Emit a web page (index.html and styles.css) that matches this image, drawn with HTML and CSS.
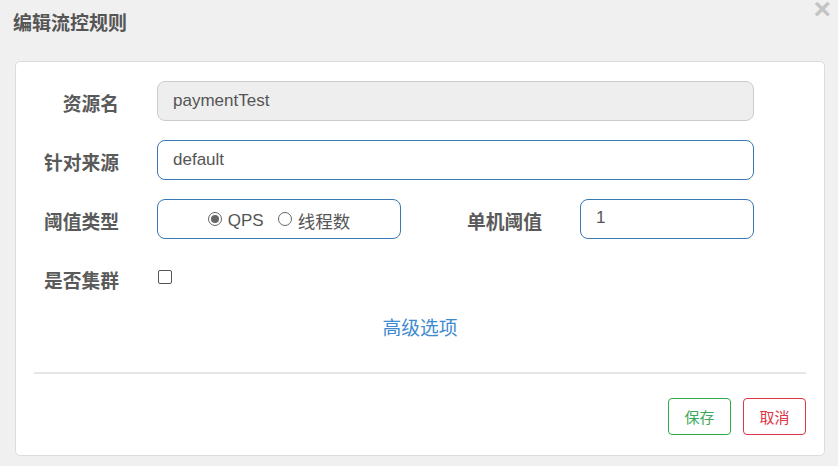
FILE: index.html
```html
<!DOCTYPE html>
<html lang="zh">
<head>
<meta charset="utf-8">
<title>编辑流控规则</title>
<link rel="stylesheet" href="styles.css">
</head>
<body>
<div class="dialog">
  <div class="header">
    <h3 class="title">编辑流控规则</h3>
    <span class="close">×</span>
  </div>
  <div class="panel">
    <div class="form">
      <div class="row">
        <label class="label">资源名</label>
        <div class="input input-disabled input-wide">paymentTest</div>
      </div>
      <div class="row">
        <label class="label">针对来源</label>
        <div class="input input-wide">default</div>
      </div>
      <div class="row">
        <label class="label">阈值类型</label>
        <div class="radio-box">
          <span class="radio checked"></span><span class="radio-text">QPS</span>
          <span class="radio radio-second"></span><span class="radio-text cjk">线程数</span>
        </div>
        <label class="label label-second">单机阈值</label>
        <div class="input input-short">1</div>
      </div>
      <div class="row">
        <label class="label">是否集群</label>
        <span class="checkbox"></span>
      </div>
    </div>
    <div class="advanced">高级选项</div>
    <div class="divider"></div>
    <div class="footer">
      <button class="btn btn-save">保存</button>
      <button class="btn btn-cancel">取消</button>
    </div>
  </div>
</div>
</body>
</html>
```
FILE: styles.css
```css
* { box-sizing: border-box; }
html, body {
  margin: 0;
  padding: 0;
  background: #f0f0f0;
  font-family: "Liberation Sans", "Noto Sans CJK SC", sans-serif;
}
.dialog {
  position: relative;
  width: 838px;
  height: 466px;
}
.header {
  height: 61px;
  padding: 12px 0 0 13px;
}
.title {
  margin: 0;
  font-family: "Noto Sans CJK SC", sans-serif;
  font-size: 19px;
  line-height: 20px;
  font-weight: 700;
  color: #555;
}
.close {
  position: absolute;
  top: 0;
  right: 7px;
  font-family: "Liberation Sans", sans-serif;
  font-size: 30px;
  font-weight: 700;
  line-height: 18px;
  color: #c4c4c4;
}
.panel {
  margin: 0 13px 0 15px;
  height: 395px;
  background: #fff;
  border: 1px solid #dcdcdc;
  border-radius: 5px;
}
.form {
  padding-top: 19px;
  display: flex;
  flex-direction: column;
  gap: 19px;
}
.row {
  display: flex;
  align-items: center;
  height: 40px;
}
.label {
  width: 103px;
  margin-right: 38px;
  text-align: right;
  font-family: "Noto Sans CJK SC", sans-serif;
  font-weight: 700;
  font-size: 18.75px;
  color: #5a5a5a;
  padding-top: 3px;
}
.label-second {
  width: 141px;
}
.input {
  height: 40px;
  border: 1px solid #3a78b5;
  border-radius: 8px;
  padding: 0 15px;
  display: flex;
  align-items: center;
  font-size: 17px;
  color: #555;
}
.input-wide { width: 597px; }
.input-short { width: 174px; padding-bottom: 3px; }
.input-disabled {
  background: #eee;
  border-color: #ccc;
}
.radio-box {
  width: 244px;
  height: 40px;
  border: 1px solid #3a78b5;
  border-radius: 8px;
  display: flex;
  align-items: center;
  justify-content: center;
  padding-top: 3px;
  font-size: 17px;
  color: #555;
}
.radio {
  width: 14px;
  height: 14px;
  border: 1.5px solid #666;
  border-radius: 50%;
  display: inline-flex;
  align-items: center;
  justify-content: center;
  margin-right: 6px;
  margin-top: -3px;
}
.radio.checked::after {
  content: "";
  width: 8px;
  height: 8px;
  border-radius: 50%;
  background: #666;
}
.radio-second { margin-left: 14px; }
.radio-text.cjk {
  font-family: "Noto Sans CJK SC", sans-serif;
  font-size: 17.5px;
}
.checkbox {
  width: 14px;
  height: 14px;
  border: 1.5px solid #555;
  border-radius: 2px;
  margin-top: -2px;
  margin-left: 1px;
}
.advanced {
  margin-top: 17px;
  text-align: center;
  font-family: "Noto Sans CJK SC", sans-serif;
  font-size: 18.75px;
  line-height: 24px;
  color: #3e8ad0;
}
.divider {
  margin: 33px 18px 0;
  border-top: 2px solid #e6e6e6;
}
.footer {
  display: flex;
  justify-content: flex-end;
  gap: 12px;
  padding: 24px 18px 0;
}
.btn {
  width: 63px;
  height: 37px;
  background: #fff;
  border: 1px solid;
  border-radius: 4px;
  font-family: "Noto Sans CJK SC", sans-serif;
  font-size: 15px;
  padding: 0;
  cursor: pointer;
}
.btn-save {
  color: #3aaa5a;
  border-color: #2ea84a;
}
.btn-cancel {
  color: #dc3545;
  border-color: #dc3545;
}
```
